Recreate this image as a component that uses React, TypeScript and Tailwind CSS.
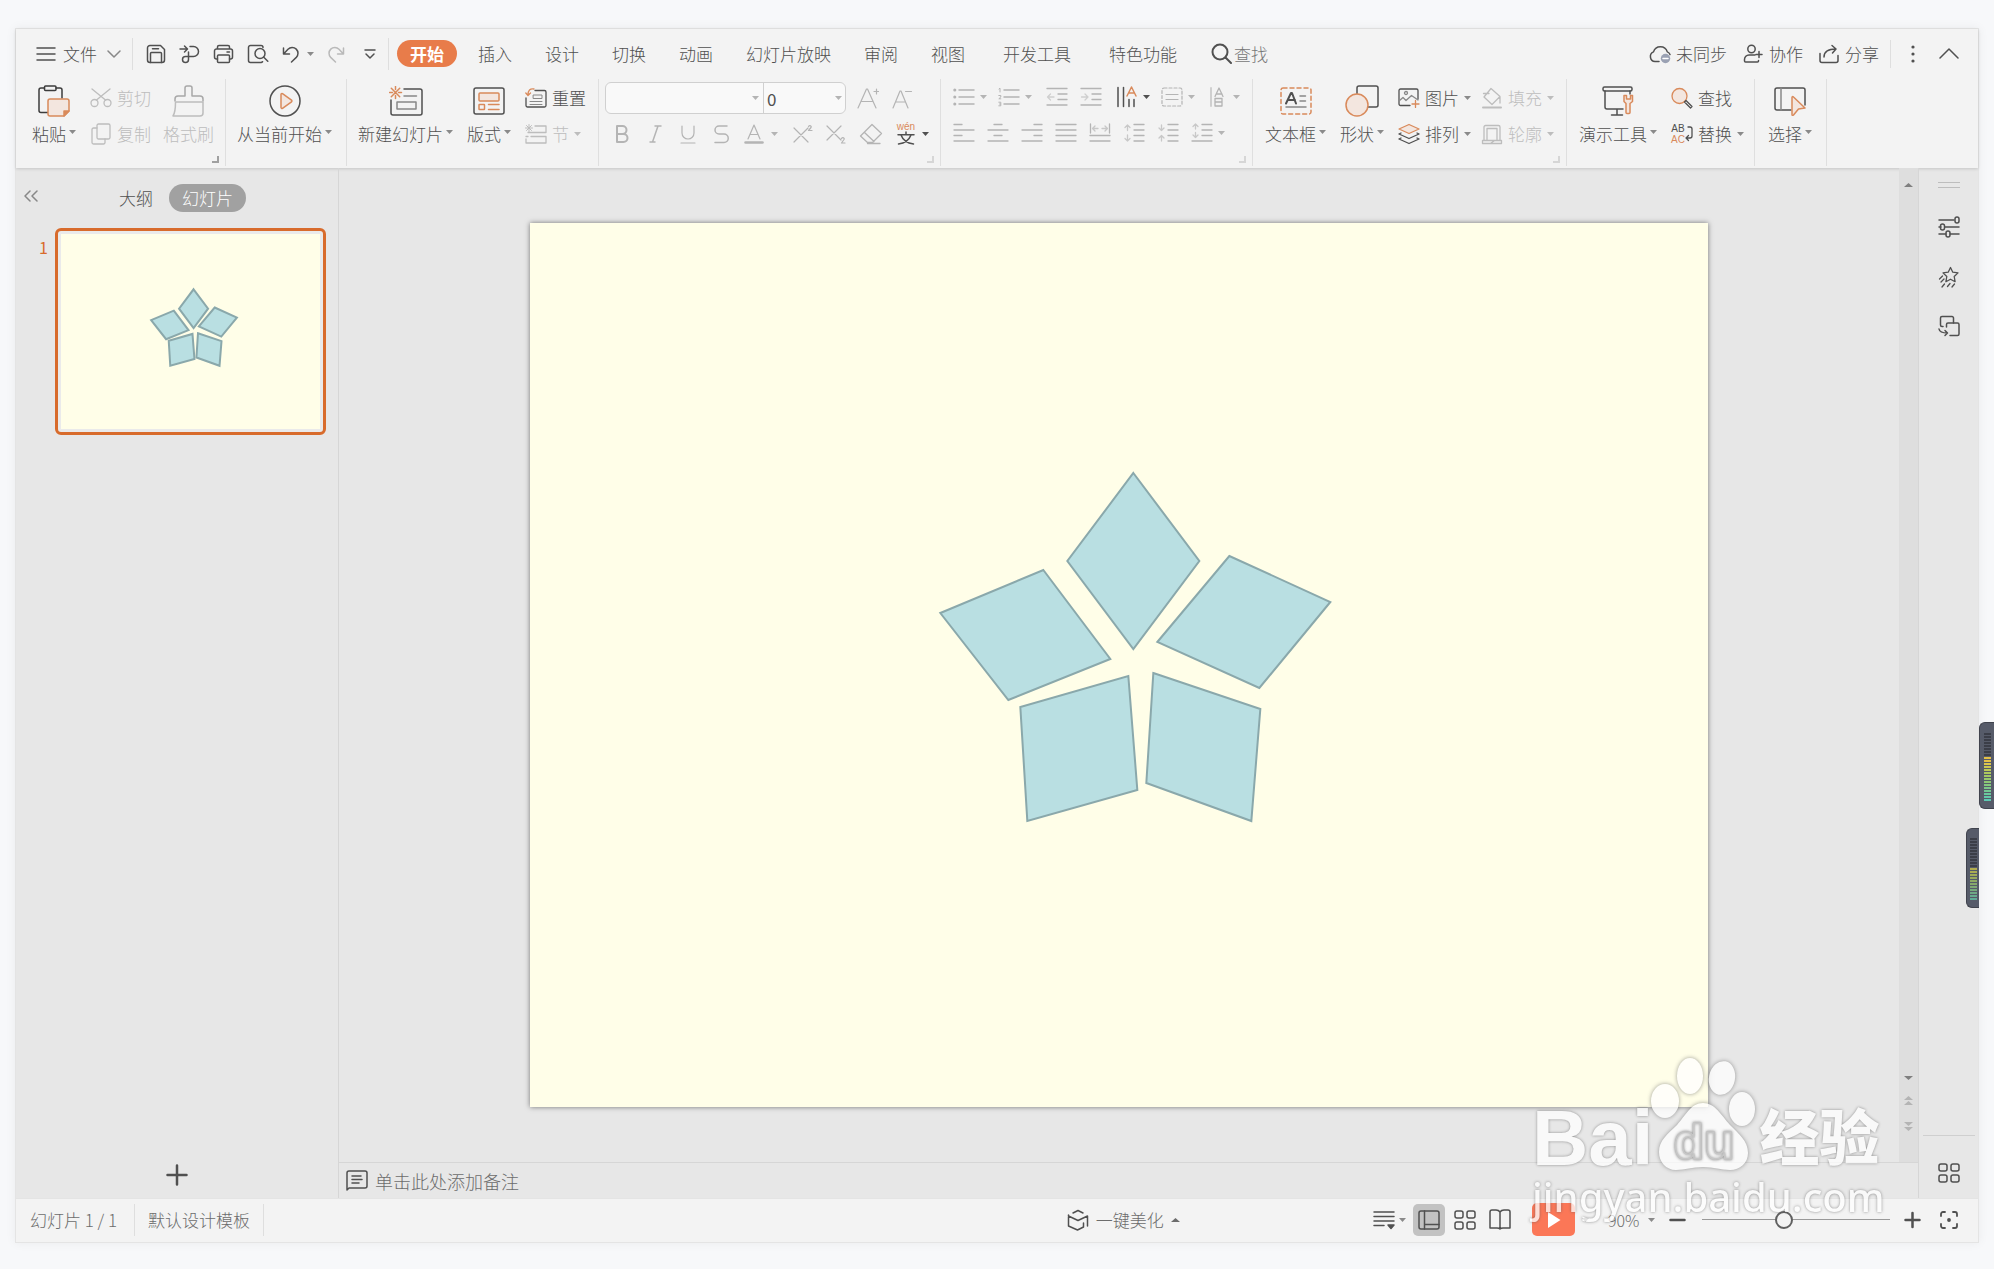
import { useState } from "react";
import type { ReactNode } from "react";

const ORANGE = "#d98a5b";
const PEACH = "#f3e6df";

function Svg({ w, h, sw = 1.5, className = "", children }: {
    w: number;
    h: number;
    sw?: number;
    className?: string;
    children: ReactNode;
}) {
    return (
        <svg
            width={w}
            height={h}
            viewBox={`0 0 ${w} ${h}`}
            fill="none"
            stroke="currentColor"
            strokeWidth={sw}
            strokeLinecap="round"
            strokeLinejoin="round"
            aria-hidden="true"
            className={`shrink-0 ${className}`}
        >
            {children}
        </svg>
    );
}

function Caret({ up = false, className = "" }: { up?: boolean; className?: string }) {
    return (
        <svg width="7" height="4" viewBox="0 0 7 4" preserveAspectRatio="none" aria-hidden="true" className={`shrink-0 ${className}`}>
            <path d={up ? "M0 4h7L3.5 0z" : "M0 0h7L3.5 4z"} fill="currentColor" />
        </svg>
    );
}

// ---------- ribbon building blocks ----------

function Group({ className = "", launcher, children }: {
    className?: string;
    launcher?: "on" | "off";
    children: ReactNode;
}) {
    return (
        <div className={`relative flex h-[87px] shrink-0 border-r border-[#dfdfdf] ${className}`}>
            {children}
            {launcher && (
                <button
                    aria-label="更多选项"
                    className={`absolute bottom-[3px] right-[6px] h-[7px] w-[7px] border-b-2 border-r-2 ${
                        launcher === "on" ? "border-[#a0a0a0]" : "border-[#d6d6d6]"
                    }`}
                />
            )}
        </div>
    );
}

function BigButton({ icon, label, caret = true, disabled = false }: {
    icon: ReactNode;
    label: string;
    caret?: boolean;
    disabled?: boolean;
}) {
    return (
        <button disabled={disabled} className={`flex shrink-0 flex-col items-center gap-[5px] pt-1.5 ${disabled ? "text-[#bdbdbd]" : "text-[#505050]"}`}>
            <span className="flex h-8 items-center">{icon}</span>
            <span className="flex h-6 items-center gap-[3px] whitespace-nowrap">
                {label}
                {caret && <Caret className="mb-1 text-[#8a8a8a]" />}
            </span>
        </button>
    );
}

function SmallButton({ icon, label, caret = false, disabled = false }: {
    icon: ReactNode;
    label: string;
    caret?: boolean;
    disabled?: boolean;
}) {
    return (
        <button disabled={disabled} className={`flex h-6 items-center gap-[5px] whitespace-nowrap ${disabled ? "text-[#bdbdbd]" : "text-[#505050]"}`}>
            <span className="flex w-[22px] justify-center">{icon}</span>
            {label}
            {caret && <Caret className={disabled ? "text-[#bdbdbd]" : "text-[#8a8a8a]"} />}
        </button>
    );
}

function SmallColumn({ children, className = "" }: { children: ReactNode; className?: string }) {
    return <div className={`flex shrink-0 flex-col items-start gap-3 pt-[7px] ${className}`}>{children}</div>;
}

function Tool({ label, caret, on = false, className = "w-[22px]", children }: {
    label: string;
    caret?: boolean;
    on?: boolean;
    className?: string;
    children: ReactNode;
}) {
    return (
        <button aria-label={label} disabled={!on} className={`flex h-6 items-center gap-[5px] ${on ? "text-[#505050]" : "text-[#b4b4b4]"}`}>
            <span className={`flex justify-center ${className}`}>{children}</span>
            {caret && <Caret />}
        </button>
    );
}

// rows of horizontal rules, each one [x1, x2, y]
function Lines({ rows }: { rows: number[][] }) {
    return (
        <>
            {rows.map(([a, b, y]) => (
                <path key={`${a}-${y}`} d={`M${a} ${y}H${b}`} />
            ))}
        </>
    );
}

// ---------- slide ----------

const petals = [
    "603,250 669,338 603,426 537,338",
    "699,333 800,379 729,465 627,419",
    "513,347 580,436 478,477 410,390",
    "598,453 607,567 497,598 490,484",
    "623,450 730,486 721,598 616,560",
];

function SlideArt() {
    return (
        <svg viewBox="0 0 1178 884" className="block h-full w-full bg-[#fffee8]" role="img" aria-label="五角星图形">
            {petals.map((points) => (
                <polygon
                    key={points}
                    points={points}
                    fill="#b9dfe2"
                    stroke="#8aa8ab"
                    strokeWidth="2"
                    vectorEffect="non-scaling-stroke"
                />
            ))}
        </svg>
    );
}

// ---------- top menu ----------

const tabs = ["开始", "插入", "设计", "切换", "动画", "幻灯片放映", "审阅", "视图"];
const extraTabs = ["开发工具", "特色功能"];

function MenuBar() {
    const [active, setActive] = useState("开始");

    const tab = (name: string) => (
        <button
            key={name}
            role="tab"
            aria-selected={active === name}
            onClick={() => setActive(name)}
            className={
                active === name
                    ? "h-[27px] rounded-full bg-[#e87c4a] px-[13px] font-bold text-white"
                    : "h-[27px]"
            }
        >
            {name}
        </button>
    );

    return (
        <div className="flex h-[49px] items-center whitespace-nowrap pl-5 pr-[19px] text-[#505050]">
            <button className="flex items-center gap-[7px]">
                <Svg w={20} h={16}>
                    <path d="M1 2h18M1 8h18M1 14h18" />
                </Svg>
                文件
                <Svg w={14} h={8} className="ml-[3px] text-[#888]">
                    <path d="M1 1l6 6 6-6" />
                </Svg>
            </button>
            <div className="ml-[11px] h-8 w-px bg-[#dedede]" />
            <div className="ml-[13px] flex items-center gap-[13px]">
                <button aria-label="保存">
                    <Svg w={20} h={20}>
                        <path d="M1.5 4A2.5 2.5 0 0 1 4 1.5h10.5l4 4V16a2.5 2.5 0 0 1-2.5 2.5H4A2.5 2.5 0 0 1 1.500 16z" />
                        <path d="M4.500 18.500V9.500a1 1 0 0 1 1-1h9a1 1 0 0 1 1 1v9M6.500 4.800h6" />
                    </Svg>
                </button>
                <button aria-label="输出为PDF">
                    <Svg w={21} h={20}>
                        <path d="M1 5h7M5.500 2l3 3-3 3M11 2.500h3.500a5 5 0 0 1 0 10H6.500a3 3 0 1 0 3 3V8" />
                    </Svg>
                </button>
                <button aria-label="打印">
                    <Svg w={21} h={20}>
                        <path d="M4.500 5V3A1.500 1.500 0 0 1 6 1.500h9A1.500 1.500 0 0 1 16.500 3v2M4.500 15H3.500a2 2 0 0 1-2-2V7a2 2 0 0 1 2-2h14a2 2 0 0 1 2 2v6a2 2 0 0 1-2 2h-1M14 8h2.500" />
                        <rect x="4.500" y="11" width="12" height="7.500" rx="1" />
                    </Svg>
                </button>
                <button aria-label="打印预览">
                    <Svg w={22} h={20}>
                        <path d="M16 3.500a2 2 0 0 0-2-2H3.500a2 2 0 0 0-2 2v13a2 2 0 0 0 2 2H14a2 2 0 0 0 1.500-.800" />
                        <circle cx="13" cy="9.500" r="5" />
                        <path d="M16.800 13.200l4 4" />
                    </Svg>
                </button>
                <button aria-label="撤销" className="flex items-center gap-[7px]">
                    <Svg w={18} h={18}>
                        <path d="M1.500 3v6h6M2 8.500L6 4.200a5.800 5.800 0 0 1 8.300 8.200L9.500 17" />
                    </Svg>
                    <Caret className="text-[#8a8a8a]" />
                </button>
                <button aria-label="恢复" disabled className="text-[#b9b9b9]">
                    <Svg w={18} h={18}>
                        <path d="M16.500 3v6h-6M16 8.500L12 4.200a5.800 5.800 0 0 0-8.300 8.200L8.500 17" />
                    </Svg>
                </button>
                <button aria-label="自定义快速访问" className="ml-1.5">
                    <Svg w={12} h={12}>
                        <path d="M1 2h10M2 6l4 4 4-4" />
                    </Svg>
                </button>
            </div>
            <div className="ml-3 h-8 w-px bg-[#dedede]" />
            <div role="tablist" className="ml-2 flex items-center">
                <div className="flex items-center gap-[33px] [&>*:first-child]:-mr-[12px]">{tabs.map(tab)}</div>
                <div className="ml-[38px] flex items-center gap-[38px]">{extraTabs.map(tab)}</div>
            </div>
            <button className="ml-[34px] flex items-center gap-0.5 text-[#777]">
                <Svg w={21} h={21} sw={2} className="text-[#505050]">
                    <circle cx="9" cy="9" r="7.500" />
                    <path d="M14.500 14.500l5.500 5.500" />
                </Svg>
                查找
            </button>

            <div className="ml-auto flex items-center gap-4">
                <button className="flex items-center gap-1">
                    <Svg w={23} h={20}>
                        <path d="M10 17.500H6a5 5 0 0 1-1.500-9.600 7.200 7.200 0 0 1 13.800 0A4.500 4.500 0 0 1 21 10.500" />
                        <circle cx="16.500" cy="14.500" r="4.700" fill="#9aa1b3" stroke="none" />
                        <path d="M14 14.500h5" stroke="#fff" />
                    </Svg>
                    未同步
                </button>
                <button className="flex items-center gap-1.5">
                    <Svg w={20} h={20}>
                        <circle cx="8.500" cy="5" r="3.700" />
                        <path d="M12 11H6a4.500 4.500 0 0 0-4.500 4.500V17a1 1 0 0 0 1 1h12a1 1 0 0 0 1-1v-.500M16 7.500v6M13 10.500h6" />
                    </Svg>
                    协作
                </button>
                <button className="flex items-center gap-1.5">
                    <Svg w={20} h={20}>
                        <path d="M1 9.500v7a2 2 0 0 0 2 2h14a2 2 0 0 0 2-2v-5M5 13c0-5 3-8 12-8M13 1.500L17 5l-3.500 4" />
                    </Svg>
                    分享
                </button>
            </div>
            <div className="ml-[11px] h-7 w-px bg-[#dedede]" />
            <button aria-label="更多" className="ml-5">
                <Svg w={4} h={18}>
                    <g fill="currentColor" stroke="none">
                        <circle cx="2" cy="2" r="1.600" />
                        <circle cx="2" cy="9" r="1.600" />
                        <circle cx="2" cy="16" r="1.600" />
                    </g>
                </Svg>
            </button>
            <button aria-label="收起功能区" className="ml-6">
                <Svg w={20} h={11}>
                    <path d="M1 10l9-9 9 9" />
                </Svg>
            </button>
        </div>
    );
}

// ---------- ribbon ----------

function FontGroup() {
    return (
        <Group className="w-[342px] flex-col gap-2 pl-1.5 pt-[3px]" launcher="off">
            <div className="flex items-center gap-[11px]">
                <div className="flex h-8 w-[241px] items-center rounded-md border border-[#d0d0d0] bg-[#f9f9f9] text-[#b4b4b4]">
                    <input aria-label="字体" defaultValue="" className="h-full w-[146px] rounded-l-md bg-transparent px-1 outline-none" />
                    <Caret />
                    <div className="ml-1 h-full w-px bg-[#d0d0d0]" />
                    <input aria-label="字号" defaultValue="0" className="h-full w-[71px] bg-transparent px-[3px] font-normal text-[#505050] outline-none" />
                    <Caret />
                </div>
                <div className="flex gap-3 text-[#b4b4b4]">
                    <button disabled aria-label="增大字号">
                        <Svg w={22} h={22} sw={1.2}>
                            <path d="M1 21L9.500 2h1L19 21M4 14.500h12M17 4.500h5M19.500 2v5" />
                        </Svg>
                    </button>
                    <button disabled aria-label="减小字号">
                        <Svg w={22} h={22} sw={1.2}>
                            <path d="M2 21L9 4h1l7 17M5 15h9.500M14.500 4.500h6" />
                        </Svg>
                    </button>
                </div>
            </div>
            <div className="flex items-center gap-[9px] pl-[5px]">
                <Tool label="加粗" className="w-6">
                    <Svg w={16} h={20} sw={2}>
                        <path d="M3 2h5.500a4 4 0 0 1 0 8H3zM3 10h6.500a4 4 0 0 1 0 8H3z" />
                    </Svg>
                </Tool>
                <Tool label="倾斜" className="w-6">
                    <Svg w={14} h={20}>
                        <path d="M7 2h6M2 18h5M10 2L4.500 18" />
                    </Svg>
                </Tool>
                <Tool label="下划线" className="w-6">
                    <Svg w={18} h={20} sw={1.2}>
                        <path d="M3 2v7a6 6 0 0 0 12 0V2M2 19h14" />
                    </Svg>
                </Tool>
                <Tool label="删除线" className="w-6">
                    <Svg w={18} h={20}>
                        <path d="M15 2H7a4 4 0 0 0 0 8h5a4 4 0 0 1 0 8.500H3" />
                    </Svg>
                </Tool>
                <Tool label="字体颜色" className="w-6" caret>
                    <Svg w={20} h={20} sw={1.2}>
                        <path d="M4 15L10 1l6 14M6 10.500h8" />
                        <path d="M1.500 18.500h17" strokeWidth="2.500" />
                    </Svg>
                </Tool>
                <div className="flex gap-[9px] pl-[3px]">
                    <Tool label="上标" className="w-6">
                        <Svg w={21} h={20} sw={1.200}>
                            <path d="M2 4l14 14M16 4L2 18M16.500 2.500c1-1.500 3.500-.500 2.500 1L16.500 6.500H20" />
                        </Svg>
                    </Tool>
                    <Tool label="下标" className="w-6">
                        <Svg w={21} h={20} sw={1.200}>
                            <path d="M2 2l14 14M16 2L2 16M16.500 14.500c1-1.500 3.500-.500 2.500 1l-2.500 3.500H20" />
                        </Svg>
                    </Tool>
                    <Tool label="清除格式" className="w-[30px]">
                        <Svg w={24} h={22} sw={1.3}>
                            <path d="M13 1.500l9.500 9-9 9H8.500L1.500 13zM5.500 9.500l9.500 9M8.500 20.500H21" />
                        </Svg>
                    </Tool>
                    <Tool label="拼音指南" className="w-[22px]" caret on>
                        <span className="flex flex-col items-center">
                            <span className="font-['Liberation_Sans'] text-[10px] leading-[8px] text-[#d98a5b]">wén</span>
                            <Svg w={18} h={14}>
                                <path d="M9 1v2.500M1 3.800h16M4 4c1.500 4 5 8 12.500 9M14 4c-1.500 4-5 8-12.500 9" />
                            </Svg>
                        </span>
                    </Tool>
                </div>
            </div>
        </Group>
    );
}

function ParagraphGroup() {
    return (
        <Group className="w-[312px] flex-col gap-3 pl-3 pt-[6px]" launcher="off">
            <div className="flex gap-[11px]">
                <Tool label="项目符号" caret>
                    <Svg w={22} h={20}>
                        <Lines rows={[[6, 21, 3], [6, 21, 10], [6, 21, 17]]} />
                        <circle cx="1.800" cy="3" r=".8" />
                        <circle cx="1.800" cy="10" r=".8" />
                        <circle cx="1.800" cy="17" r=".8" />
                    </Svg>
                </Tool>
                <Tool label="编号" caret>
                    <Svg w={22} h={20}>
                        <Lines rows={[[6, 21, 3], [6, 21, 10], [6, 21, 17]]} />
                        <path d="M1 2l1-.8V5M.800 8.500h2v1.500l-2 1.800h2M.800 15.200h2v3.600h-2M1.500 17h1" strokeWidth="1" />
                    </Svg>
                </Tool>
                <div className="flex gap-3 pl-[3px]">
                    <Tool label="减少缩进">
                        <Svg w={22} h={20} sw={1.3}>
                            <Lines rows={[[1, 21, 1.5], [12, 21, 7], [12, 21, 12.5], [1, 21, 18]]} />
                            <path d="M8 10H1.500M4.500 7l-3 3 3 3" stroke="#cfcfcf" />
                        </Svg>
                    </Tool>
                    <Tool label="增加缩进">
                        <Svg w={22} h={20} sw={1.3}>
                            <Lines rows={[[1, 21, 1.5], [12, 21, 7], [12, 21, 12.5], [1, 21, 18]]} />
                            <path d="M1.500 10H8M5 7l3 3-3 3" stroke="#cfcfcf" />
                        </Svg>
                    </Tool>
                </div>
                <div className="pl-[3px]">
                    <Tool label="文字方向" caret on>
                        <Svg w={22} h={22}>
                            <path d="M2 1.500v19M7.500 1.500v19M13 13.500v7M18 13.500v7" />
                            <path d="M11 10l4.500-9L20 10M12.500 7h6" stroke={ORANGE} />
                        </Svg>
                    </Tool>
                </div>
                <Tool label="对齐文本" caret>
                    <Svg w={22} h={20} sw={1.200}>
                        <rect x="1" y="1" width="20" height="18" rx="2" strokeDasharray="3 2" />
                        <path d="M5 7.500h12M5 12.500h12" />
                    </Svg>
                </Tool>
                <Tool label="转换为智能图形" caret>
                    <Svg w={16} h={20} sw={1.300}>
                        <path d="M2 1v18" strokeWidth="2" stroke="#cfcfcf" />
                        <path d="M6 9.500l4-8.500 4 8.500M7.200 7h5.800M6 11.500h7v7.500H6zM6 15h7" />
                    </Svg>
                </Tool>
            </div>
            <div className="flex gap-3">
                <Tool label="左对齐">
                    <Svg w={22} h={20} sw={1.3}>
                        <Lines rows={[[1, 9, 1.5], [1, 21, 7], [1, 9, 12.5], [1, 21, 18]]} />
                    </Svg>
                </Tool>
                <Tool label="居中">
                    <Svg w={22} h={20} sw={1.3}>
                        <Lines rows={[[7, 15, 1.5], [1, 21, 7], [7, 15, 12.5], [1, 21, 18]]} />
                    </Svg>
                </Tool>
                <Tool label="右对齐">
                    <Svg w={22} h={20} sw={1.3}>
                        <Lines rows={[[13, 21, 1.5], [1, 21, 7], [13, 21, 12.5], [1, 21, 18]]} />
                    </Svg>
                </Tool>
                <Tool label="两端对齐">
                    <Svg w={22} h={20} sw={1.3}>
                        <Lines rows={[[1, 21, 1.5], [1, 21, 7], [1, 21, 12.5], [1, 21, 18]]} />
                    </Svg>
                </Tool>
                <Tool label="分散对齐">
                    <Svg w={22} h={20} sw={1.3}>
                        <Lines rows={[[1, 21, 12.5], [1, 21, 18]]} />
                        <path d="M1.500 1v9M20.500 1v9" />
                        <path d="M9 5.500H4M6 3L3.500 5.500 6 8M13 5.500h5M16 3l2.500 2.500L16 8" stroke="#c8c8c8" />
                    </Svg>
                </Tool>
                <Tool label="增大行距">
                    <Svg w={22} h={20} sw={1.3}>
                        <Lines rows={[[11, 21, 1.5], [11, 21, 7], [11, 21, 12.5], [11, 21, 18]]} />
                        <path d="M4.500 7.500V2M2 4.500L4.500 2 7 4.500M4.500 12v6M2 15.500L4.500 18 7 15.500" stroke="#c8c8c8" />
                    </Svg>
                </Tool>
                <Tool label="减小行距">
                    <Svg w={22} h={20} sw={1.3}>
                        <Lines rows={[[11, 21, 1.5], [11, 21, 7], [11, 21, 12.5], [11, 21, 18]]} />
                        <path d="M4.500 2v5.500M2 5l2.500 2.500L7 5M4.500 18v-5.500M2 15l2.500-2.500L7 15" stroke="#c8c8c8" />
                    </Svg>
                </Tool>
                <Tool label="行距" caret>
                    <Svg w={22} h={20} sw={1.3}>
                        <Lines rows={[[11, 21, 1.5], [11, 21, 7], [11, 21, 12.5], [1, 21, 18]]} />
                        <path d="M4.500 6V1M2 3.500L4.500 1 7 3.500M4.500 9.500v5M2 12l2.500 2.500L7 12" stroke="#c8c8c8" />
                    </Svg>
                </Tool>
            </div>
        </Group>
    );
}

function Ribbon() {
    return (
        <div className="flex h-[90px] pt-px">
            <Group className="w-[210px] pl-4" launcher="on">
                <BigButton
                    label="粘贴"
                    icon={
                        <Svg w={32} h={32} className="text-[#3c3c3c]">
                            <path d="M10.500 27.500H3a2 2 0 0 1-2-2V5a2 2 0 0 1 2-2h3.500M18 3h4a2 2 0 0 1 2 2v8" />
                            <rect x="6.500" y="1" width="11.500" height="4.500" rx="1" />
                            <path d="M12 14h17a2 2 0 0 1 2 2v10l-5 5H12a2 2 0 0 1-2-2V16a2 2 0 0 1 2-2z" fill={PEACH} stroke={ORANGE} />
                            <path d="M26 31v-5h5z" fill={ORANGE} stroke={ORANGE} />
                        </Svg>
                    }
                />
                <SmallColumn className="ml-[14px]">
                    <SmallButton
                        disabled
                        label="剪切"
                        icon={
                            <Svg w={22} h={20} sw={1.3}>
                                <circle cx="4.500" cy="15" r="3.500" />
                                <circle cx="17.500" cy="15" r="3.500" />
                                <path d="M6.500 12L20 1M15.500 12L2 1" />
                            </Svg>
                        }
                    />
                    <SmallButton
                        disabled
                        label="复制"
                        icon={
                            <Svg w={20} h={22} sw={1.3}>
                                <rect x="6" y="1" width="13" height="15" rx="1.500" />
                                <path d="M6 5H2.500A1.500 1.500 0 0 0 1 6.500v13A1.500 1.500 0 0 0 2.500 21h10a1.500 1.500 0 0 0 1.500-1.500V16" />
                            </Svg>
                        }
                    />
                </SmallColumn>
                <div className="ml-3 flex">
                    <BigButton
                        disabled
                        caret={false}
                        label="格式刷"
                        icon={
                            <Svg w={33} h={32}>
                                <path d="M3 16v-2a3 3 0 0 1 3-3h7V3a2 2 0 0 1 2-2h3a2 2 0 0 1 2 2v8h8a3 3 0 0 1 3 3v2" stroke="#a8a8a8" />
                                <path d="M3.500 17H31M3.500 17c0 7-.5 11-2.500 14h27a3 3 0 0 0 3-3V17" />
                            </Svg>
                        }
                    />
                </div>
            </Group>

            <Group className="w-[121px] pl-[11px]">
                <BigButton
                    label="从当前开始"
                    icon={
                        <Svg w={32} h={32}>
                            <circle cx="16" cy="16" r="15" />
                            <path d="M12 9.500a1 1 0 0 1 1.500-.800l9 6.500a1 1 0 0 1 0 1.600l-9 6.500a1 1 0 0 1-1.500-.800z" fill={PEACH} stroke={ORANGE} />
                        </Svg>
                    }
                />
            </Group>

            <Group className="w-[252px] gap-3.5 pl-[11px]">
                <BigButton
                    label="新建幻灯片"
                    icon={
                        <Svg w={34} h={30}>
                            <path d="M15 3h16a2 2 0 0 1 2 2v22a2 2 0 0 1-2 2H4a2 2 0 0 1-2-2V14" />
                            <path d="M15 10h12.500M8 16h19v7H8z" stroke="#888" />
                            <path d="M6.500.500v3M6.500 9.500v3M.500 6.500h3M9.500 6.500h3M2.300 2.300l8.400 8.400M10.700 2.300l-8.400 8.400" stroke={ORANGE} />
                        </Svg>
                    }
                />
                <BigButton
                    label="版式"
                    icon={
                        <Svg w={32} h={28}>
                            <rect x="1" y="1" width="30" height="26" rx="2" />
                            <g stroke={ORANGE}>
                                <rect x="6" y="6" width="20" height="8" rx="1" fill={PEACH} />
                                <rect x="6" y="17.500" width="5.500" height="5" rx=".5" />
                                <path d="M15.500 17.500H26M15.500 22.500H26" />
                            </g>
                        </Svg>
                    }
                />
                <SmallColumn>
                    <SmallButton
                        label="重置"
                        icon={
                            <Svg w={22} h={20} sw={1.300}>
                                <path d="M10 2.500h9.500a1.500 1.500 0 0 1 1.500 1.500v13.500a1.500 1.500 0 0 1-1.500 1.500h-17A1.500 1.500 0 0 1 1 17.500V10" />
                                <path d="M8.500 7h8.500v3.500H8.500zM5 13.500h12M5 16.500h12" stroke="#888" strokeWidth="1" />
                                <path d="M9 1C5 .500 3 2 3 7M.800 5L3 7.500 5.500 5" stroke={ORANGE} />
                            </Svg>
                        }
                    />
                    <SmallButton
                        disabled
                        caret
                        label="节"
                        icon={
                            <Svg w={22} h={20} sw={1.300}>
                                <path d="M10 2h11v6.500H3M1 12.500h2M6 12.500h15V19H1v-4" />
                                <path d="M4 .500v7M.500 4h7M1.500 1.500l5 5M6.500 1.500l-5 5" strokeWidth="1" />
                            </Svg>
                        }
                    />
                </SmallColumn>
            </Group>

            <FontGroup />
            <ParagraphGroup />

            <Group className="w-[314px] gap-3.5 pl-3" launcher="off">
                <BigButton
                    label="文本框"
                    icon={
                        <Svg w={32} h={28}>
                            <rect x="1" y="1" width="30" height="26" rx="2" stroke={ORANGE} strokeDasharray="4 3" />
                            <path d="M6 16.500L11 6h1l4 10.500M8 13h7" strokeWidth="2" />
                            <path d="M20 9h5.500M20 14h5.500M6 20h20" stroke="#888" />
                        </Svg>
                    }
                />
                <BigButton
                    label="形状"
                    icon={
                        <Svg w={34} h={32}>
                            <rect x="12" y="1" width="21" height="21" rx="2" />
                            <circle cx="12" cy="20" r="11" fill={PEACH} stroke={ORANGE} />
                        </Svg>
                    }
                />
                <SmallColumn>
                    <SmallButton
                        caret
                        label="图片"
                        icon={
                            <Svg w={22} h={20} sw={1.300}>
                                <path d="M12 17.500H2.500A1.500 1.500 0 0 1 1 16V2.500A1.500 1.500 0 0 1 2.500 1h16A1.500 1.500 0 0 1 20 2.500V11" />
                                <path d="M1 13l4-3.500 3 3 5.500-5L20 12" stroke="#888" />
                                <circle cx="8" cy="5" r="1.500" stroke="#888" />
                                <path d="M17.500 12.500v7M14 16h7" stroke={ORANGE} />
                            </Svg>
                        }
                    />
                    <SmallButton
                        caret
                        label="排列"
                        icon={
                            <Svg w={22} h={22} sw={1.300}>
                                <path d="M1 11l10 4.500L21 11M1 16l10 4.500L21 16M1 11l2-1M21 11l-2-1M1 16l2-1M21 16l-2-1" />
                                <path d="M11 1.500l10 4.500-10 4.500L1 6z" fill={PEACH} stroke={ORANGE} />
                            </Svg>
                        }
                    />
                </SmallColumn>
                <SmallColumn className="-ml-1">
                    <SmallButton
                        disabled
                        caret
                        label="填充"
                        icon={
                            <Svg w={22} h={22} sw={1.300}>
                                <path d="M2.500 6.500H8M10 1.500l9 8-8 8-8-7.500zM19 10v6" />
                                <path d="M2 20.500h18" strokeWidth="2" />
                            </Svg>
                        }
                    />
                    <SmallButton
                        disabled
                        caret
                        label="轮廓"
                        icon={
                            <Svg w={22} h={21} sw={1.300}>
                                <path d="M3 16V3a1.500 1.500 0 0 1 1.500-1.500h13A1.500 1.500 0 0 1 19 3v13M6 16V4.500h10V16" />
                                <path d="M1.500 16.500h19v3h-19zM10 19l3-2" />
                            </Svg>
                        }
                    />
                </SmallColumn>
            </Group>

            <Group className="w-[188px] gap-3.5 pl-3">
                <BigButton
                    label="演示工具"
                    icon={
                        <Svg w={32} h={30}>
                            <rect x="1" y="1" width="29" height="4" rx="1.500" />
                            <path d="M3 5v16a2 2 0 0 0 2 2h16M28 5v3M15 23v5.500M9.500 29h11" />
                            <path d="M22 9.500v6l2 2v9a1 1 0 0 0 1 1h2a1 1 0 0 0 1-1v-9l2.500-2V9.500h-2V13h-4V9.500z" fill={PEACH} stroke={ORANGE} />
                        </Svg>
                    }
                />
                <SmallColumn>
                    <SmallButton
                        label="查找"
                        icon={
                            <Svg w={22} h={22} sw={1.300}>
                                <circle cx="8.500" cy="9" r="7.500" fill={PEACH} stroke={ORANGE} />
                                <path d="M13.500 15l1.500-1.500 6 6-1.500 1.500z" />
                            </Svg>
                        }
                    />
                    <SmallButton
                        caret
                        label="替换"
                        icon={
                            <span className="flex items-center">
                                <span className="flex flex-col font-['Liberation_Sans'] text-[10px] leading-[11px]">
                                    <span>AB</span>
                                    <span className="text-[#d98a5b]">AC</span>
                                </span>
                                <Svg w={8} h={16} sw={1.300}>
                                    <path d="M3 1h2a2 2 0 0 1 2 2v7a2 2 0 0 1-2 2H1M3.500 9.500L1 12l2.500 2.500" />
                                </Svg>
                            </span>
                        }
                    />
                </SmallColumn>
            </Group>

            <Group className="w-[72px] pl-[13px]">
                <BigButton
                    label="选择"
                    icon={
                        <Svg w={32} h={30}>
                            <path d="M17 24H3a2 2 0 0 1-2-2V4a2 2 0 0 1 2-2h26a2 2 0 0 1 2 2v15" />
                            <path d="M7 2v22" stroke="#888" />
                            <path d="M18 11.500c0-1 .8-1.200 1.500-.500L31 22l-6.500 1-5 6c-.7.700-1.500.500-1.500-.500z" fill={PEACH} stroke={ORANGE} />
                        </Svg>
                    }
                />
            </Group>
        </div>
    );
}

// ---------- body ----------

function SlidePanel() {
    return (
        <aside className="flex w-[323px] shrink-0 flex-col border-r border-[#d6d6d6]">
            <div className="flex h-[60px] items-center pl-2 text-[#505050]">
                <button aria-label="收起窗格" className="mb-1">
                    <Svg w={14} h={12} className="text-[#888]">
                        <path d="M6 1L1 6l5 5M13 1L8 6l5 5" />
                    </Svg>
                </button>
                <button className="ml-[81px]">大纲</button>
                <button className="ml-4 h-7 rounded-full bg-[#a1a1a1] px-[13px] text-white">幻灯片</button>
            </div>
            <div className="flex gap-[9px] pl-[23px]">
                <span className="w-[7px] pt-[7px] text-[16px] font-normal text-[#d86b2c]">1</span>
                <button aria-label="幻灯片 1" className="h-[207px] w-[271px] rounded-md border-3 border-[#d86b2c] bg-[#eaeaea] p-[3px]">
                    <SlideArt />
                </button>
            </div>
            <button aria-label="新建幻灯片" className="mx-auto mb-3 mt-auto text-[#505050]">
                <Svg w={22} h={22} sw={2.500}>
                    <path d="M11 1.500v19M1.500 11h19" />
                </Svg>
            </button>
        </aside>
    );
}

function ScrollBar() {
    return (
        <div className="flex w-[19px] shrink-0 flex-col items-center bg-[#dedede] pb-[27px] pt-[15px] text-[#808080]">
            <button aria-label="向上滚动" className="flex"><Caret up className="w-[9px]" /></button>
            <button aria-label="向下滚动" className="mt-auto flex"><Caret className="w-[9px]" /></button>
            <button aria-label="上一张" className="mt-4 flex flex-col gap-px text-[#b4b4b4]">
                <Caret up className="w-[9px]" />
                <Caret up className="w-[9px]" />
            </button>
            <button aria-label="下一张" className="mb-1 mt-[17px] flex flex-col gap-px text-[#b4b4b4]">
                <Caret className="w-[9px]" />
                <Caret className="w-[9px]" />
            </button>
        </div>
    );
}

function GridIcon() {
    return (
        <Svg w={22} h={20}>
            <rect x="1" y="1" width="8" height="7" rx="2" />
            <rect x="13" y="1" width="8" height="7" rx="2" />
            <rect x="1" y="12" width="8" height="7" rx="2" />
            <rect x="13" y="12" width="8" height="7" rx="2" />
        </Svg>
    );
}

function SideBar() {
    return (
        <aside className="flex w-[60px] shrink-0 flex-col items-center border-l border-[#d6d6d6] pt-[14px] text-[#505050]">
            <div className="h-[6px] w-[22px] border-y border-[#bdbdbd]" />
            <button aria-label="对象属性" className="mt-7">
                <Svg w={22} h={22}>
                    <path d="M1 4h15M1 11h2M7 11h14M1 18h7M12 18h9" />
                    <rect x="17" y="1" width="4" height="6" rx="2" />
                    <rect x="2.500" y="8" width="4" height="6" rx="2" />
                    <rect x="8" y="15" width="4" height="6" rx="2" />
                </Svg>
            </button>
            <button aria-label="自定义动画" className="mt-7">
                <Svg w={22} h={22} sw={1.300}>
                    <path d="M12.500 1.500l2.300 4.700 5.200.700-3.800 3.600.9 5.200-4.600-2.500-4.600 2.500.9-5.200L5 6.900l5.200-.7z" />
                    <path d="M1.500 13l3-3M3 16l3-3M4 21l2.500-3M9.500 20.500l2.500-3M14 21l2.500-3" />
                </Svg>
            </button>
            <button aria-label="幻灯片切换" className="mt-[27px]">
                <Svg w={22} h={22}>
                    <path d="M5 11.500H4a1.500 1.500 0 0 1-1.500-1.500V3A1.500 1.500 0 0 1 4 1.500h10A1.500 1.500 0 0 1 15.500 3v5" />
                    <path d="M8.500 12V9.500A1.500 1.500 0 0 1 10 8h9.500A1.500 1.500 0 0 1 21 9.500V19a1.500 1.500 0 0 1-1.500 1.500H12M1 14c.500 3 3 4 8.500 4M7 15.500L9.500 18 7 20.500" />
                </Svg>
            </button>
            <div className="mt-auto h-px w-[52px] bg-[#cfcfcf]" />
            <button aria-label="更多窗格" className="mb-[15px] mt-[27px]">
                <GridIcon />
            </button>
        </aside>
    );
}

function StatusBar() {
    return (
        <footer className="flex h-[44px] shrink-0 items-center whitespace-nowrap border-t border-[#e4e4e4] bg-[#f3f3f3] pb-0.5 text-[#6c6c6c]">
            <div className="flex flex-[27] items-center">
                <span className="w-[118px] pl-[14px]">幻灯片 1 / 1</span>
                <div className="h-8 w-px bg-[#dedede]" />
                <span className="px-[13px]">默认设计模板</span>
                <div className="h-8 w-px bg-[#dedede]" />
            </div>
            <button className="flex items-center gap-[7px]">
                <Svg w={22} h={22} className="text-[#505050]">
                    <path d="M6 4l5-2.500L16 4M1.500 6v11l9 4 6-3v-4M1.500 7l9.500 4.500L20.500 7v10" />
                </Svg>
                一键美化
                <Caret up className="w-[9px]" />
            </button>
            <div className="flex flex-[20] items-center justify-end pr-5 text-[#505050]">
                <button aria-label="备注" className="flex items-center gap-1">
                    <Svg w={22} h={20}>
                        <path d="M1 2h20M1 6.500h20M1 11h20M1 15.500h10" />
                        <path d="M15 15h6l-3 3.500z" fill="currentColor" />
                    </Svg>
                    <Caret className="text-[#8a8a8a]" />
                </button>
                <button aria-label="普通视图" className="ml-[7px] flex h-8 w-8 items-center justify-center rounded-[5px] bg-[#c2c2c2]">
                    <Svg w={22} h={20}>
                        <rect x="1" y="1" width="20" height="18" rx="2" />
                        <path d="M6.500 1v18M6.500 14.500H21" />
                    </Svg>
                </button>
                <button aria-label="幻灯片浏览" className="ml-[9px]">
                    <GridIcon />
                </button>
                <button aria-label="阅读视图" className="ml-[13px]">
                    <Svg w={22} h={21}>
                        <path d="M11 3v17M11 3c-1-1.500-2-2-4-2H3a2 2 0 0 0-2 2v16h7c1.500 0 2.500.300 3 1 .500-.700 1.500-1 3-1h7V3a2 2 0 0 0-2-2h-4c-2 0-3 .500-4 2z" />
                    </Svg>
                </button>
                <button aria-label="从当前幻灯片播放" className="ml-[21px] flex h-[33px] w-[43px] items-center justify-center rounded-[5px] bg-[#fb7757]">
                    <svg width="14" height="16" viewBox="0 0 14 16" aria-hidden="true">
                        <path d="M1 0l12.500 8L1 16z" fill="#fff" />
                    </svg>
                </button>
                <Caret className="ml-[7px] text-[#8a8a8a]" />
                <label className="ml-[19px] flex items-center gap-[6px] text-[#6c6c6c]">
                    <select aria-label="显示比例" defaultValue="90%" className="w-[34px] appearance-none bg-transparent text-[16px] outline-none">
                        <option>90%</option>
                        <option>100%</option>
                    </select>
                    <Caret className="text-[#8a8a8a]" />
                </label>
                <button aria-label="缩小" className="ml-[14px]">
                    <Svg w={17} h={18} sw={2.500}>
                        <path d="M1.500 9h14" />
                    </Svg>
                </button>
                <input
                    type="range"
                    aria-label="缩放"
                    defaultValue={43}
                    className="ml-4 h-[18px] w-[188px] appearance-none bg-[linear-gradient(#999,#999)] bg-[length:100%_1px] bg-center bg-no-repeat
                    [&::-webkit-slider-thumb]:h-[18px] [&::-webkit-slider-thumb]:w-[18px] [&::-webkit-slider-thumb]:appearance-none
                    [&::-webkit-slider-thumb]:rounded-full [&::-webkit-slider-thumb]:border-2 [&::-webkit-slider-thumb]:border-[#606060]
                    [&::-webkit-slider-thumb]:bg-[#f3f3f3]"
                />
                <button aria-label="放大" className="ml-[14px]">
                    <Svg w={17} h={18} sw={2.500}>
                        <path d="M1.500 9h14M8.500 2v14" />
                    </Svg>
                </button>
                <button aria-label="适合窗口" className="ml-[19px]">
                    <Svg w={18} h={18} sw={1.800}>
                        <path d="M1 5V3a2 2 0 0 1 2-2h2M13 1h2a2 2 0 0 1 2 2v2M17 13v2a2 2 0 0 1-2 2h-2M5 17H3a2 2 0 0 1-2-2v-2" />
                        <circle cx="9" cy="9" r="1" fill="currentColor" />
                    </Svg>
                </button>
            </div>
        </footer>
    );
}

// ---------- floating things ----------

function Meter({ className, dark, lit }: { className: string; dark: number; lit: string[] }) {
    return (
        <div className={`absolute flex flex-col items-center gap-px rounded-l-md border border-r-0 border-[#40434d] bg-[#565b69] ${className}`}>
            {Array.from({ length: dark }, (_, i) => (
                <span key={i} className="h-[2px] w-[7px] bg-[#3b3e48]" />
            ))}
            {lit.map((color, i) => (
                <span key={i} className="h-[2px] w-[7px]" style={{ backgroundColor: color }} />
            ))}
        </div>
    );
}

const brightBars = ["#e3c046", "#e3c046", "#dcc64c", "#cbc850", "#bccb57", "#adc95d", "#a3c963", "#98ca6c", "#8dc974", "#84c97e", "#7bc888", "#72c893", "#69c99e", "#62c9a8", "#5ccab2"];
const dimBars = ["#b1ac4f", "#aaac53", "#a0ab58", "#98aa5e", "#8faa65", "#87a96c", "#7fa974", "#76aa7d", "#6fa986", "#67aa8e", "#61aa97"];

function Watermark() {
    return (
        <div className="pointer-events-none absolute bottom-12 right-[106px] w-[356px] text-white opacity-75 [text-shadow:0_0_3px_rgba(90,90,90,0.9)]">
            <div className="-mb-1 flex items-end">
                <span className="font-['Liberation_Sans'] text-[78px] font-bold leading-[78px]">Bai</span>
                <svg width="106" height="118" viewBox="0 0 106 118" className="-ml-[3px] mb-1 drop-shadow-[0_0_2px_rgba(90,90,90,0.8)]" aria-hidden="true">
                    <g fill="#fff">
                        <ellipse cx="15" cy="46" rx="14" ry="17" />
                        <ellipse cx="40" cy="21" rx="13" ry="18" />
                        <ellipse cx="72" cy="23" rx="13" ry="17" transform="rotate(12 72 23)" />
                        <ellipse cx="92" cy="54" rx="13" ry="17" />
                        <path d="M53 48c12 0 18 12 27 22 9 9 18 16 18 28 0 10-8 17-18 17-9 0-16-3-27-3s-18 3-27 3c-10 0-17-8-17-18 0-12 9-18 18-27 9-10 14-22 26-22z" />
                    </g>
                    <text x="54" y="104" textAnchor="middle" fontFamily="Liberation Sans" fontSize="50" fontWeight="bold" fill="#fff" stroke="#bbb" strokeWidth="1.500">du</text>
                </svg>
                <span className="ml-[3px] text-[60px] font-black leading-[86px]">经验</span>
            </div>
            <div className="font-['Noto_Sans'] text-[40px] font-medium leading-[48px]">jingyan.baidu.com</div>
        </div>
    );
}

export default function App() {
    return (
        <div className="relative h-screen overflow-hidden bg-[#f7f8fa] px-[15px] pb-[26px] pt-7 font-['Noto_Sans_CJK_SC',sans-serif] text-[17px] font-light leading-6">
            <div className="flex h-full flex-col border border-[#e4e4e4] bg-[#e7e7e7] shadow-[0_0_10px_rgba(0,0,0,0.06)]">
                <header className="shrink-0 bg-[#f3f3f3] shadow-[0_1px_3px_rgba(0,0,0,0.15)]">
                    <MenuBar />
                    <Ribbon />
                </header>
                <div className="flex min-h-0 flex-1">
                    <SlidePanel />
                    <main className="flex min-w-0 flex-1 flex-col">
                        <div className="flex min-h-0 flex-1">
                            <div className="flex min-w-0 flex-1 justify-center py-[55px]">
                                <div className="aspect-[4/3] h-full shadow-[0_0_5px_rgba(0,0,0,0.5)]">
                                    <SlideArt />
                                </div>
                            </div>
                            <ScrollBar />
                        </div>
                        <label className="flex h-9 shrink-0 items-center gap-[7px] border-t border-[#d6d6d6] pl-[7px] text-[#6c6c6c]">
                            <Svg w={22} h={21} className="text-[#505050]">
                                <path d="M1 20V3a2 2 0 0 1 2-2h16a2 2 0 0 1 2 2v13a2 2 0 0 1-2 2H3zM6 6h9M6 9.500h10M6 13h7" />
                            </Svg>
                            <input
                                placeholder="单击此处添加备注"
                                className="flex-1 bg-transparent text-[18px] outline-none placeholder:text-[#6c6c6c]"
                            />
                        </label>
                    </main>
                    <SideBar />
                </div>
                <StatusBar />
            </div>

            <Meter className="right-0 top-[722px] h-[87px] w-[15px] pt-[10px]" dark={8} lit={brightBars} />
            <Meter className="right-[15px] top-[828px] h-[80px] w-[13px] pt-[9px]" dark={10} lit={dimBars} />
            <Watermark />
        </div>
    );
}
